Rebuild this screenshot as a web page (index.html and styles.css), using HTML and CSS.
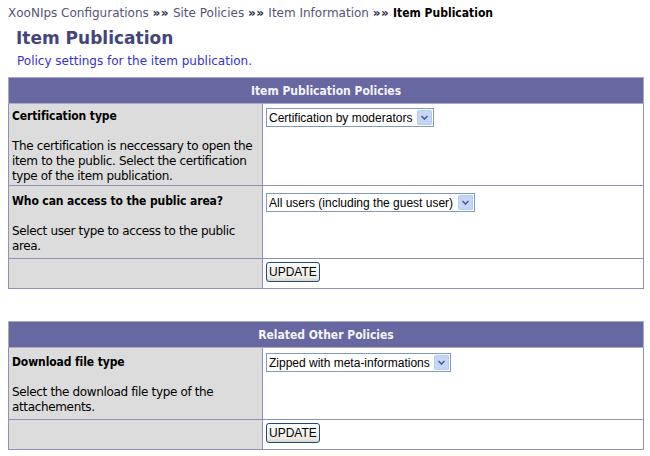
FILE: index.html
```html
<!DOCTYPE html>
<html>
<head>
<meta charset="utf-8">
<link rel="stylesheet" href="styles.css">
</head>
<body>
<div class="crumbs">
  <a class="crumb">XooNIps Configurations</a> <b class="sep">&raquo;&raquo;</b>
  <a class="crumb">Site Policies</a> <b class="sep">&raquo;&raquo;</b>
  <a class="crumb">Item Information</a> <b class="sep">&raquo;&raquo;</b>
  <b class="current">Item Publication</b>
</div>
<h3 class="title">Item Publication</h3>
<p class="desc">Policy settings for the item publication.</p>

<table class="outer">
  <tr><th colspan="2" class="head">Item Publication Policies</th></tr>
  <tr class="r1">
    <td class="label">
      <div class="lab">Certification type</div>
      <div class="help">The certification is neccessary to open the item to the public. Select the certification type of the item publication.</div>
    </td>
    <td class="value">
      <select class="sel"><option>Certification by moderators</option></select>
    </td>
  </tr>
  <tr class="r2">
    <td class="label">
      <div class="lab">Who can access to the public area?</div>
      <div class="help">Select user type to access to the public area.</div>
    </td>
    <td class="value">
      <select class="sel"><option>All users (including the guest user)</option></select>
    </td>
  </tr>
  <tr class="rb">
    <td class="label"></td>
    <td class="value"><button class="btn">UPDATE</button></td>
  </tr>
</table>

<table class="outer second">
  <tr><th colspan="2" class="head">Related Other Policies</th></tr>
  <tr class="r3">
    <td class="label">
      <div class="lab">Download file type</div>
      <div class="help">Select the download file type of the attachements.</div>
    </td>
    <td class="value">
      <select class="sel"><option>Zipped with meta-informations</option></select>
    </td>
  </tr>
  <tr class="rb">
    <td class="label"></td>
    <td class="value"><button class="btn">UPDATE</button></td>
  </tr>
</table>
</body>
</html>
```
FILE: styles.css
```css
body {
  margin: 6px 6px 8px 8px;
  font-family: "DejaVu Sans", Verdana, sans-serif;
  font-size: 12px;
  color: #000;
  background: #fff;
}
.crumbs {
  font-size: 12px;
  line-height: 15px;
  color: #4a4a6a;
}
.crumb { color: #555575; }
.sep { color: #2a2a4a; font-size: 12px; letter-spacing: 0.5px; }
.current { color: #000; font-stretch: condensed; }
.title {
  margin: 6px 0 0 8px;
  font-size: 17px;
  line-height: 22px;
  color: #45457a;
  font-weight: bold;
}
.desc {
  margin: 5px 0 0 9px;
  font-size: 12px;
  line-height: 15px;
  color: #3333cc;
}
.outer {
  margin-top: 8px;
  width: 636px;
  border-collapse: collapse;
  border: 1px solid #a8a8c8;
}
.second { margin-top: 32px; }
.head {
  background: #6767a1;
  color: #f4f4fa;
  font-weight: bold;
  font-stretch: condensed;
  font-size: 12px;
  height: 25px;
  padding: 0;
  text-align: center;
  border: 1px solid #a8a8c8;
}
td {
  border: 1px solid #8f8fb8;
  vertical-align: top;
  padding: 4px 4px 1px 3px;
}
.label {
  width: 246px;
  background: #dcdcdc;
  vertical-align: middle;
}
.value { background: #fff; padding-left: 3px; }
.lab { font-weight: bold; font-stretch: condensed; line-height: 15px; letter-spacing: -0.1px; }
.help { margin-top: 15px; line-height: 15px; letter-spacing: -0.35px; }
.r1 .label { height: 76px; }
.r2 .label { height: 67px; }
.r3 .label { height: 66px; }
.r2 .value { padding-top: 7px; }
.r3 .value { padding-top: 5px; }
.rb td { height: 20px; padding-top: 3px; padding-bottom: 6px; }
.sel {
  appearance: none;
  -webkit-appearance: none;
  font-family: "Liberation Sans", Arial, sans-serif;
  font-size: 12px;
  height: 19px;
  padding: 0 20px 0 2px;
  border: 1px solid #7f9db9;
  border-radius: 0;
  background: #fff url("data:image/svg+xml;utf8,<svg xmlns='http://www.w3.org/2000/svg' width='15' height='15'><rect x='0.5' y='0.5' width='14' height='14' rx='1' fill='%23c6d6fb' stroke='%23b9c9ef'/><path d='M4.5 6 L7.5 9 L10.5 6' fill='none' stroke='%234d6185' stroke-width='1.6'/></svg>") no-repeat right 1px center;
  color: #000;
  margin: 0;
}
.btn {
  font-family: "Liberation Sans", Arial, sans-serif;
  font-size: 12px;
  height: 20px;
  padding: 0 2px;
  margin: 0;
  border: 1px solid #1c4b7c;
  border-radius: 3px;
  background: linear-gradient(#ffffff, #ecebe5 80%, #d8d4c8);
  color: #000;
}
```
